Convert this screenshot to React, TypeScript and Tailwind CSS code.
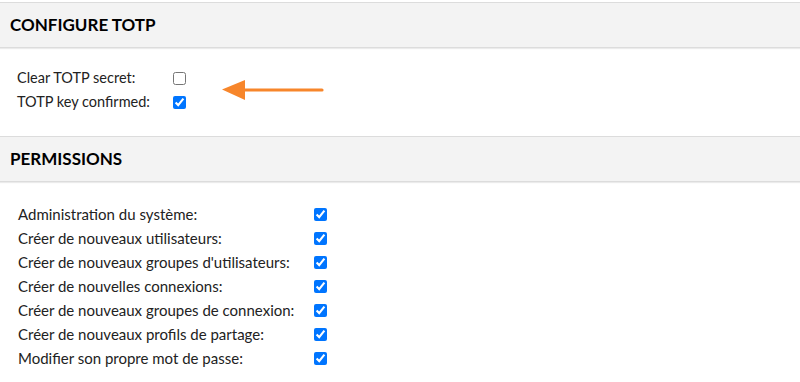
import React from 'react'

const permissions = [
  'Administration du système:',
  'Créer de nouveaux utilisateurs:',
  "Créer de nouveaux groupes d'utilisateurs:",
  'Créer de nouvelles connexions:',
  'Créer de nouveaux groupes de connexion:',
  'Créer de nouveaux profils de partage:',
  'Modifier son propre mot de passe:',
]

function SectionHeader({ title }: { title: string }) {
  return (
    <div className="h-[46px] border-t border-b border-[#dcdcdc] bg-[#f3f3f3] px-[10px] flex items-center shadow-[0_1px_1px_rgba(0,0,0,0.08)]">
      <h2 className="text-[17px] font-bold text-black">{title}</h2>
    </div>
  )
}

function Row({ label, checked, labelClass }: { label: string; checked: boolean; labelClass: string }) {
  return (
    <div className="flex items-center h-[24px]">
      <span className={`${labelClass} text-[#222]`}>{label}</span>
      <input type="checkbox" defaultChecked={checked} className="m-0 w-[13px] h-[13px]" />
    </div>
  )
}

export default function App() {
  return (
    <div className="w-[800px] h-[382px] bg-white overflow-hidden pt-[2px]" style={{ fontFamily: 'Lato, "Liberation Sans", sans-serif' }}>
      <SectionHeader title="CONFIGURE TOTP" />
      <div className="relative pl-[17px] pt-[18px] pb-[22px]">
        <Row label="Clear TOTP secret:" checked={false} labelClass="w-[156px] text-[14.5px]" />
        <Row label="TOTP key confirmed:" checked={true} labelClass="w-[156px] text-[14.5px]" />
        <svg className="absolute left-[220px] top-[30px]" width="106" height="24" viewBox="0 0 106 24">
          <line x1="20" y1="12" x2="102" y2="12" stroke="#f7862b" strokeWidth="3.2" strokeLinecap="round" />
          <polygon points="2,11.5 25,2 25,22" fill="#f7862b" />
        </svg>
      </div>
      <SectionHeader title="PERMISSIONS" />
      <div className="pl-[18px] pt-[20px]">
        {permissions.map((p) => (
          <Row key={p} label={p} checked={true} labelClass="w-[296px] text-[15px]" />
        ))}
      </div>
    </div>
  )
}
